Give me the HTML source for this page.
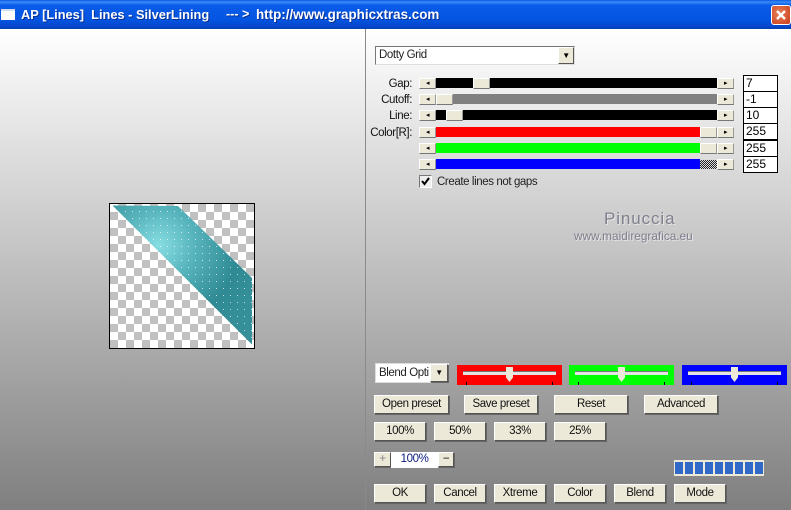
<!DOCTYPE html>
<html><head><meta charset="utf-8">
<style>
html,body{margin:0;padding:0}
body{width:791px;height:510px;overflow:hidden;position:relative;font-family:"Liberation Sans",sans-serif;font-size:11.5px;letter-spacing:-.4px;color:#000;background:#999}
#bg{position:absolute;left:0;top:29px;width:791px;height:481px;background:linear-gradient(#fff 0,#7f7f7f 100%)}
#tb{position:absolute;left:0;top:0;width:791px;height:29px;background:linear-gradient(#0a58e0 0,#3a8cf8 2px,#0a5ce8 5px,#0455e2 20px,#0344c8 27px,#0a3fb0 29px)}
.tt{position:absolute;top:7px;color:#fff;font-weight:bold;letter-spacing:0;white-space:pre;text-shadow:1px 1px 0 #0a2f90}
#ic{position:absolute;left:1px;top:9px;width:14px;height:11px;background:#fff;border-top:2px solid #cde;box-sizing:border-box}
#x{position:absolute;left:771px;top:5px;width:20px;height:20px;box-sizing:border-box;border:1px solid #fff;border-radius:3px;background:radial-gradient(circle at 40% 40%,#e8805a,#c83c18)}
#ln{position:absolute;left:365px;top:29px;width:1px;height:481px;background:#8a8a8a}
.a{position:absolute;box-sizing:border-box}
.b{background:#ece9d8;border:1px solid;border-color:#fff #555 #555 #fff;box-shadow:1px 1px 0 #666;text-align:center;line-height:17px;color:#111}
.r{text-align:right;left:360px;width:52px;color:#111;white-space:nowrap}
.s{background:#ece9d8;border:1px solid;border-color:#fff #999 #777 #fff;height:11px}
.ar{font-size:7px;line-height:9px;text-align:center}
.v{left:743px;width:35px;height:17px;background:#fff;border:1px solid #000;padding-left:2px;line-height:14px;font-size:12px;letter-spacing:0}
.w{position:absolute;color:#7f7f8e;letter-spacing:0;text-shadow:1px 1px 0 #e6e6e6}
.tk{height:3px;width:1px;background:#000}
.rail{height:4px;background:#e4e4e4;border-top:1px solid #777}
.th{width:7px;height:15px;background:#ece9d8;clip-path:polygon(0 0,100% 0,100% 70%,50% 100%,0 70%)}
.cell{position:absolute;top:462px;width:8px;height:12px;background:#3069c8}
</style></head>
<body>
<div id="bg"></div>
<div id="tb"></div>
<div id="ic"></div>
<div class="tt" style="left:21px;font-size:12.8px">AP [Lines]  Lines - SilverLining</div>
<div class="tt" style="left:226px;font-size:12.5px">--- &gt;</div>
<div class="tt" style="left:256px;font-size:13.4px">http://www.graphicxtras.com</div>
<div id="x"><svg width="18" height="18" style="position:absolute;left:0;top:0"><path d="M5 5 L13 13 M13 5 L5 13" stroke="#fff" stroke-width="2.4"/></svg></div>
<div id="ln"></div>

<svg class="a" style="left:109px;top:203px" width="146" height="146">
<defs>
<pattern id="c" width="16" height="16" patternUnits="userSpaceOnUse" x="1" y="1"><rect width="16" height="16" fill="#fff"/><rect x="8" y="0" width="8" height="8" fill="#c0c0c0"/><rect x="0" y="8" width="8" height="8" fill="#c0c0c0"/></pattern>
<pattern id="d" width="7" height="7" patternUnits="userSpaceOnUse" x="2" y="1"><rect width="1" height="1" fill="#fff" opacity=".7"/></pattern>
<radialGradient id="g" gradientUnits="userSpaceOnUse" cx="50" cy="42" r="105"><stop offset="0" stop-color="#86dde2"/><stop offset=".35" stop-color="#56b3bb"/><stop offset=".75" stop-color="#2f8a93"/><stop offset="1" stop-color="#358f98"/></radialGradient>
</defs>
<rect x=".5" y=".5" width="145" height="145" fill="url(#c)" stroke="#000"/>
<polygon points="3.5,2.5 69,3 143,75 143,141.5" fill="url(#g)"/>
<polygon points="3.5,2.5 69,3 143,75 143,141.5" fill="url(#d)"/>
</svg>

<div class="a" style="left:375px;top:46px;width:200px;height:19px;background:#fff;border:1px solid;border-color:#777 #ddd #ddd #777;padding-left:3px;line-height:17px;color:#222">Dotty Grid</div>
<div class="a s ar" style="left:558px;top:47px;width:16px;height:17px;line-height:15px;border-color:#fff #555 #555 #fff;font-size:8px;color:#000">▼</div>

<div class="a r" style="top:78px">Gap:</div>
<div class="a r" style="top:94px">Cutoff:</div>
<div class="a r" style="top:110px">Line:</div>
<div class="a r" style="top:127px">Color[R]:</div>

<div class="a" style="left:436px;top:78px;width:281px;height:10px;background:#000"></div>
<div class="a" style="left:436px;top:94px;width:281px;height:10px;background:#808080"></div>
<div class="a" style="left:436px;top:110px;width:281px;height:10px;background:#000"></div>
<div class="a" style="left:436px;top:127px;width:264px;height:10px;background:#f00"></div>
<div class="a" style="left:436px;top:143px;width:264px;height:10px;background:#0f0"></div>
<div class="a" style="left:436px;top:159px;width:264px;height:10px;background:#00f"></div>

<div class="a s" style="left:473px;top:78px;width:17px"></div>
<div class="a s" style="left:436px;top:94px;width:17px"></div>
<div class="a s" style="left:446px;top:110px;width:17px"></div>
<div class="a s" style="left:700px;top:127px;width:17px"></div>
<div class="a s" style="left:700px;top:143px;width:17px"></div>
<div class="a" style="left:700px;top:160px;width:17px;height:9px;background:repeating-conic-gradient(#222 0 25%,#ddd 0 50%) 0 0/2px 2px"></div>

<div class="a s ar" style="left:419px;top:78px;width:17px">◂</div><div class="a s ar" style="left:717px;top:78px;width:17px">▸</div>
<div class="a s ar" style="left:419px;top:94px;width:17px">◂</div><div class="a s ar" style="left:717px;top:94px;width:17px">▸</div>
<div class="a s ar" style="left:419px;top:110px;width:17px">◂</div><div class="a s ar" style="left:717px;top:110px;width:17px">▸</div>
<div class="a s ar" style="left:419px;top:127px;width:17px">◂</div><div class="a s ar" style="left:717px;top:127px;width:17px">▸</div>
<div class="a s ar" style="left:419px;top:143px;width:17px">◂</div><div class="a s ar" style="left:717px;top:143px;width:17px">▸</div>
<div class="a s ar" style="left:419px;top:159px;width:17px">◂</div><div class="a s ar" style="left:717px;top:159px;width:17px">▸</div>

<div class="a v" style="top:75px">7</div>
<div class="a v" style="top:91px">-1</div>
<div class="a v" style="top:107px">10</div>
<div class="a v" style="top:123px">255</div>
<div class="a v" style="top:140px">255</div>
<div class="a v" style="top:156px">255</div>

<div class="a" style="left:419px;top:175px;width:13px;height:13px;background:#eee;border:1px solid;border-color:#777 #fff #fff #777"><svg width="11" height="11" style="position:absolute;left:0;top:0"><path d="M2 5 L4.5 8 L9 2" fill="none" stroke="#000" stroke-width="2"/></svg></div>
<div class="a" style="left:437px;top:176px;color:#222;white-space:nowrap">Create lines not gaps</div>

<div class="w" style="left:604px;top:209px;font-size:17px;letter-spacing:.9px">Pinuccia</div>
<div class="w" style="left:574px;top:229px;font-size:11.8px;white-space:nowrap">www.maidiregrafica.eu</div>

<div class="a" style="left:375px;top:363px;width:74px;height:20px;background:#fff;border:1px solid #ddd;padding-left:3px;line-height:18px;overflow:hidden;white-space:nowrap;color:#222">Blend Opti</div>
<div class="a b" style="left:430px;top:364px;width:18px;height:18px;line-height:15px;font-size:8px">▼</div>

<div class="a" style="left:457px;top:365px;width:105px;height:20px;background:#f00"></div>
<div class="a" style="left:569px;top:365px;width:105px;height:20px;background:#0f0"></div>
<div class="a" style="left:682px;top:365px;width:105px;height:20px;background:#00f"></div>
<div class="a rail" style="left:463px;top:371px;width:93px"></div>
<div class="a rail" style="left:575px;top:371px;width:93px"></div>
<div class="a rail" style="left:688px;top:371px;width:93px"></div>
<div class="a th" style="left:506px;top:367px"></div>
<div class="a th" style="left:618px;top:367px"></div>
<div class="a th" style="left:731px;top:367px"></div>
<div class="a tk" style="left:466px;top:382px"></div><div class="a tk" style="left:552px;top:382px"></div>
<div class="a tk" style="left:578px;top:382px"></div><div class="a tk" style="left:664px;top:382px"></div>
<div class="a tk" style="left:691px;top:382px"></div><div class="a tk" style="left:777px;top:382px"></div>

<div class="a b" style="left:374px;top:395px;width:75px;height:19px">Open preset</div>
<div class="a b" style="left:464px;top:395px;width:74px;height:19px">Save preset</div>
<div class="a b" style="left:554px;top:395px;width:74px;height:19px">Reset</div>
<div class="a b" style="left:644px;top:395px;width:74px;height:19px">Advanced</div>

<div class="a b" style="left:374px;top:422px;width:52px;height:19px">100%</div>
<div class="a b" style="left:434px;top:422px;width:52px;height:19px">50%</div>
<div class="a b" style="left:494px;top:422px;width:52px;height:19px">33%</div>
<div class="a b" style="left:554px;top:422px;width:52px;height:19px">25%</div>

<div class="a b" style="left:374px;top:452px;width:17px;height:15px;line-height:13px;color:#888">+</div>
<div class="a" style="left:391px;top:452px;width:47px;height:16px;background:#fff;color:#0a1a80;text-align:center;line-height:15px">100%</div>
<div class="a b" style="left:438px;top:452px;width:16px;height:15px;line-height:12px">−</div>

<div class="a" style="left:674px;top:460px;width:90px;height:16px;background:#ece9d8"></div>
<div class="cell" style="left:675px"></div><div class="cell" style="left:685px"></div><div class="cell" style="left:695px"></div><div class="cell" style="left:705px"></div><div class="cell" style="left:715px"></div><div class="cell" style="left:725px"></div><div class="cell" style="left:735px"></div><div class="cell" style="left:745px"></div><div class="cell" style="left:755px"></div>

<div class="a b" style="left:374px;top:484px;width:52px;height:19px">OK</div>
<div class="a b" style="left:434px;top:484px;width:52px;height:19px">Cancel</div>
<div class="a b" style="left:494px;top:484px;width:52px;height:19px">Xtreme</div>
<div class="a b" style="left:554px;top:484px;width:52px;height:19px">Color</div>
<div class="a b" style="left:614px;top:484px;width:52px;height:19px">Blend</div>
<div class="a b" style="left:674px;top:484px;width:52px;height:19px">Mode</div>
</body></html>
